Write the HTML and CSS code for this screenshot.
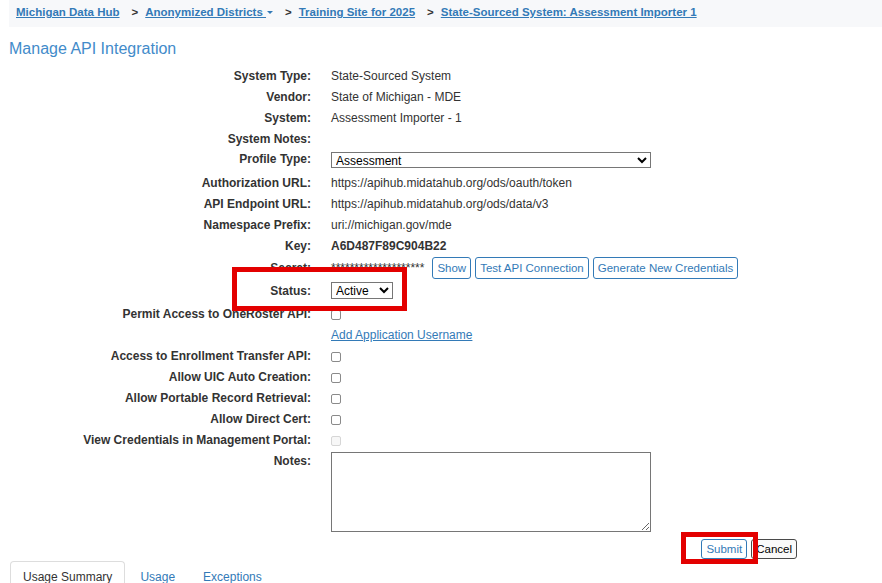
FILE: index.html
```html
<!DOCTYPE html>
<html>
  <head>
    <link rel="stylesheet" href="styles.css">
  </head>
  <body>
    <div class="page">
      <ul class="breadcrumb">
        <li><a href="#">Michigan Data Hub</a></li>
        <li><a href="#">Anonymized Districts <span class="caret"></span></a></li>
        <li><a href="#">Training Site for 2025</a></li>
        <li><a href="#">State-Sourced System: Assessment Importer 1</a></li>
      </ul>

      <h1 class="title">Manage API Integration</h1>

      <div class="form">
        <div class="row"><div class="label">System Type:</div><div class="value">State-Sourced System</div></div>
        <div class="row"><div class="label">Vendor:</div><div class="value">State of Michigan - MDE</div></div>
        <div class="row"><div class="label">System:</div><div class="value">Assessment Importer - 1</div></div>
        <div class="row"><div class="label">System Notes:</div><div class="value"></div></div>
        <div class="row row-select">
          <div class="label">Profile Type:</div>
          <div class="value">
            <select class="profile-select">
              <option>Assessment</option>
            </select>
          </div>
        </div>
        <div class="row"><div class="label">Authorization URL:</div><div class="value">https://apihub.midatahub.org/ods/oauth/token</div></div>
        <div class="row"><div class="label">API Endpoint URL:</div><div class="value">https://apihub.midatahub.org/ods/data/v3</div></div>
        <div class="row"><div class="label">Namespace Prefix:</div><div class="value">uri://michigan.gov/mde</div></div>
        <div class="row"><div class="label">Key:</div><div class="value key">A6D487F89C904B22</div></div>
        <div class="row row-secret">
          <div class="label">Secret:</div>
          <div class="value">
            <span class="secret">********************</span>
            <button class="btn">Show</button>
            <button class="btn">Test API Connection</button>
            <button class="btn">Generate New Credentials</button>
          </div>
        </div>
        <div class="row row-status">
          <div class="label">Status:</div>
          <div class="value">
            <select class="status-select">
              <option>Active</option>
            </select>
          </div>
        </div>
        <div class="row"><div class="label">Permit Access to OneRoster API:</div><div class="value"><input type="checkbox" class="check"></div></div>
        <div class="row"><div class="label"></div><div class="value"><a href="#" class="link">Add Application Username</a></div></div>
        <div class="row"><div class="label">Access to Enrollment Transfer API:</div><div class="value"><input type="checkbox" class="check"></div></div>
        <div class="row"><div class="label">Allow UIC Auto Creation:</div><div class="value"><input type="checkbox" class="check"></div></div>
        <div class="row"><div class="label">Allow Portable Record Retrieval:</div><div class="value"><input type="checkbox" class="check"></div></div>
        <div class="row"><div class="label">Allow Direct Cert:</div><div class="value"><input type="checkbox" class="check"></div></div>
        <div class="row"><div class="label">View Credentials in Management Portal:</div><div class="value"><input type="checkbox" class="check" disabled></div></div>
        <div class="row row-notes">
          <div class="label">Notes:</div>
          <div class="value"><textarea class="notes"></textarea></div>
        </div>
        <div class="actions">
          <button class="btn btn-submit">Submit</button>
          <button class="btn btn-cancel">Cancel</button>
        </div>
      </div>

      <ul class="tabs">
        <li class="active"><a href="#">Usage Summary</a></li>
        <li><a href="#">Usage</a></li>
        <li><a href="#">Exceptions</a></li>
      </ul>

      <div class="highlight highlight-status"></div>
      <div class="highlight highlight-submit"></div>
    </div>
  </body>
</html>
```

FILE: styles.css
```css
body {
  margin: 0;
  font-family: "Liberation Sans", Arial, sans-serif;
  font-size: 12px;
  color: #333333;
  background-color: #ffffff;
  overflow: hidden;
}

.page {
  position: relative;
  padding-left: 9px;
}

a {
  color: #337ab7;
}

/* breadcrumb */
.breadcrumb {
  list-style: none;
  margin: 0;
  padding: 4px 7px 6px;
  background-color: #f7f8fa;
  display: flex;
  line-height: 17px;
  font-size: 11.5px;
  font-weight: bold;
}

.breadcrumb li + li::before {
  content: ">";
  color: #333333;
  margin: 0 7px 0 12px;
}

.caret {
  display: inline-block;
  width: 0;
  height: 0;
  margin-left: 1px;
  vertical-align: middle;
  border-top: 3px solid #337ab7;
  border-left: 3px solid transparent;
  border-right: 3px solid transparent;
}

.title {
  margin: 12px 0 0;
  font-size: 16px;
  line-height: 20px;
  font-weight: normal;
  color: #428bca;
}

/* form rows */
.form {
  margin-top: 7px;
}

.row {
  display: flex;
  align-items: center;
  min-height: 21px;
  line-height: 17px;
}

.row-select {
  align-items: flex-start;
  min-height: 23px;
}

.row-select .label {
  padding-top: 1px;
}

.row-select select {
  margin-top: 2px;
}

.row-secret {
  align-items: baseline;
  min-height: 24px;
}

.row-secret .value {
  display: flex;
  align-items: baseline;
  gap: 4px;
}

.row-status {
  align-items: flex-start;
  min-height: 23px;
}

.row-status .label {
  padding-top: 2px;
}

.row-status select {
  margin-top: 1px;
}

.row-notes {
  align-items: flex-start;
}

.row-notes .label {
  padding-top: 2px;
}

.label {
  width: 302px;
  text-align: right;
  font-weight: bold;
  flex-shrink: 0;
}

.value {
  margin-left: 20px;
}

.key {
  font-weight: bold;
}

.secret {
  margin-right: 4px;
}

select {
  font-family: "Liberation Sans", Arial, sans-serif;
  font-size: 12px;
  color: #000000;
  border: 1px solid #767676;
  border-radius: 0;
  background-color: #ffffff;
  padding: 0;
  margin: 0;
  display: block;
}

.profile-select {
  width: 320px;
  height: 16px;
}

.status-select {
  width: 62px;
  height: 17px;
}

.check {
  appearance: none;
  -webkit-appearance: none;
  display: block;
  width: 10px;
  height: 10px;
  margin: 0;
  border: 1px solid #8a8a8a;
  border-radius: 2px;
  background-color: #ffffff;
  box-sizing: border-box;
}

.check:disabled {
  border-color: #d6d6d6;
  background-color: #f7f7f7;
}

.notes {
  display: block;
  width: 320px;
  height: 80px;
  margin: 1px 0 3px;
  border: 1px solid #767676;
  box-sizing: border-box;
}

/* buttons */
.btn {
  font-family: "Liberation Sans", Arial, sans-serif;
  font-size: 11.5px;
  height: 22px;
  padding: 0 4px;
  margin: 0;
  color: #337ab7;
  background-color: #ffffff;
  border: 1px solid #337ab7;
  border-radius: 3px;
  cursor: pointer;
}

.actions {
  display: flex;
  justify-content: flex-end;
  gap: 4px;
  width: 788px;
  margin-top: 4px;
}

.btn-submit,
.btn-cancel {
  height: 20px;
  padding: 0 4px;
}

.btn-cancel {
  color: #000000;
  border-color: #4a4a4a;
  background-color: #fafafa;
}

/* tabs */
.tabs {
  list-style: none;
  margin: 2px 0 0 1px;
  padding: 0;
  display: flex;
  font-size: 12px;
}

.tabs li {
  margin-right: 2px;
}

.tabs a {
  display: block;
  padding: 6px 12px;
  line-height: 18px;
  border: 1px solid transparent;
  border-radius: 4px 4px 0 0;
  text-decoration: none;
}

.tabs .active a {
  color: #333333;
  border-color: #dddddd;
  border-bottom-color: transparent;
}

/* annotation boxes */
.highlight {
  position: absolute;
  border: 5px solid #e30000;
  box-sizing: border-box;
}

.highlight-status {
  left: 232px;
  top: 267px;
  width: 175px;
  height: 44px;
}

.highlight-submit {
  left: 681px;
  top: 532px;
  width: 77px;
  height: 32px;
}
```
